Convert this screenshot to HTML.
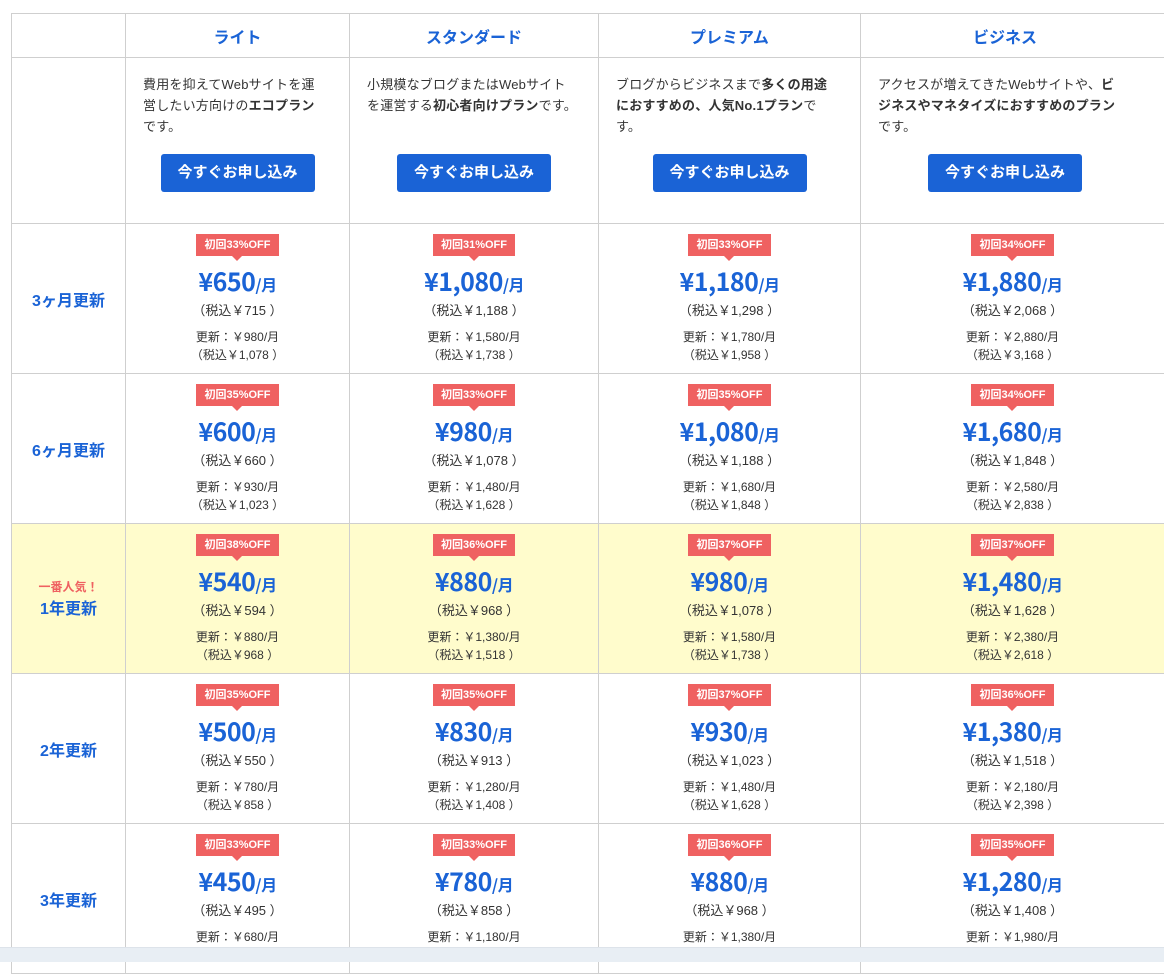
<!DOCTYPE html><html><head><meta charset="utf-8"><style>
body{margin:0;width:1164px;height:961px;overflow:hidden;background:#fff;font-family:"Liberation Sans","Noto Sans CJK JP",sans-serif;color:#333}
table{position:absolute;left:11px;top:13px;border-collapse:collapse;table-layout:fixed;width:1160px}
td{border:1px solid #cfcfcf;padding:0;vertical-align:top;text-align:center}
.h td{height:43px;vertical-align:middle;color:#1a63d6;font-weight:bold;font-size:16px}
.d td{height:165px;text-align:left}
.desc{font-size:13px;line-height:21px;padding:16px 20px 0 17px;height:80px;letter-spacing:0.2px}
.d td:nth-child(2) .desc{padding-right:28px}
.d td:last-child .desc{width:244px;padding-right:0}
.btn{display:block;margin:0 auto;width:154px;height:38px;line-height:38px;background:#1a63d6;color:#fff;border-radius:3px;font-weight:bold;font-size:15px;text-align:center}
.d td:last-child .btn{margin-left:67px}
.r td{height:149px}
.lab{vertical-align:middle!important;color:#1a63d6;font-weight:bold;font-size:16px}
.y td{background:#fffccc}
.badge{display:inline-block;position:relative;margin-top:10px;background:#ef6161;color:#fff;font-weight:bold;font-size:11px;height:22px;line-height:22px;padding:0 8px}
.badge:after{content:"";position:absolute;left:50%;margin-left:-5px;bottom:-5px;border:5px solid transparent;border-bottom:0;border-top-color:#ef6161}
.p{color:#1a63d6;font-weight:bold;font-size:25px;line-height:30px;height:30px;margin-top:10px;font-family:"Noto Sans CJK JP",sans-serif;letter-spacing:-0.5px}
.p small{font-size:16px;line-height:16px}
.t{font-size:13px;line-height:18px;margin-top:6px}
.u{font-size:12px;line-height:18px;margin-top:8px}
.pop{color:#ef6161;font-size:12px;display:block;line-height:16px}
.bar{position:absolute;left:0;top:947px;width:1164px;height:14px;background:#e8eef4;border-top:1px solid #dde3ea}
</style></head><body>
<table>
<colgroup><col style="width:114px"><col style="width:224px"><col style="width:249px"><col style="width:262px"><col style="width:311px"></colgroup>
<tr class="h"><td></td><td>ライト</td><td>スタンダード</td><td>プレミアム</td><td style="text-align:left;padding-left:112px">ビジネス</td></tr>
<tr class="d"><td></td>
<td><div class="desc">費用を抑えてWebサイトを運営したい方向けの<b>エコプラン</b>です。</div><span class="btn">今すぐお申し込み</span></td>
<td><div class="desc">小規模なブログまたはWebサイトを運営する<b>初心者向けプラン</b>です。</div><span class="btn">今すぐお申し込み</span></td>
<td><div class="desc">ブログからビジネスまで<b>多くの用途におすすめの、人気No.1プラン</b>です。</div><span class="btn">今すぐお申し込み</span></td>
<td><div class="desc">アクセスが増えてきたWebサイトや、<b>ビジネスやマネタイズにおすすめのプラン</b>です。</div><span class="btn">今すぐお申し込み</span></td></tr>

<tr class="r"><td class="lab">3ヶ月更新</td>
<td><span class="badge">初回33%OFF</span><div class="p">¥650<small>/月</small></div><div class="t">（税込￥715 ）</div><div class="u">更新：￥980/月<br>（税込￥1,078 ）</div></td>
<td><span class="badge">初回31%OFF</span><div class="p">¥1,080<small>/月</small></div><div class="t">（税込￥1,188 ）</div><div class="u">更新：￥1,580/月<br>（税込￥1,738 ）</div></td>
<td><span class="badge">初回33%OFF</span><div class="p">¥1,180<small>/月</small></div><div class="t">（税込￥1,298 ）</div><div class="u">更新：￥1,780/月<br>（税込￥1,958 ）</div></td>
<td style="padding-right:7px"><span class="badge">初回34%OFF</span><div class="p">¥1,880<small>/月</small></div><div class="t">（税込￥2,068 ）</div><div class="u">更新：￥2,880/月<br>（税込￥3,168 ）</div></td></tr>

<tr class="r"><td class="lab">6ヶ月更新</td>
<td><span class="badge">初回35%OFF</span><div class="p">¥600<small>/月</small></div><div class="t">（税込￥660 ）</div><div class="u">更新：￥930/月<br>（税込￥1,023 ）</div></td>
<td><span class="badge">初回33%OFF</span><div class="p">¥980<small>/月</small></div><div class="t">（税込￥1,078 ）</div><div class="u">更新：￥1,480/月<br>（税込￥1,628 ）</div></td>
<td><span class="badge">初回35%OFF</span><div class="p">¥1,080<small>/月</small></div><div class="t">（税込￥1,188 ）</div><div class="u">更新：￥1,680/月<br>（税込￥1,848 ）</div></td>
<td style="padding-right:7px"><span class="badge">初回34%OFF</span><div class="p">¥1,680<small>/月</small></div><div class="t">（税込￥1,848 ）</div><div class="u">更新：￥2,580/月<br>（税込￥2,838 ）</div></td></tr>

<tr class="r y"><td class="lab"><span class="pop">一番人気！</span>1年更新</td>
<td><span class="badge">初回38%OFF</span><div class="p">¥540<small>/月</small></div><div class="t">（税込￥594 ）</div><div class="u">更新：￥880/月<br>（税込￥968 ）</div></td>
<td><span class="badge">初回36%OFF</span><div class="p">¥880<small>/月</small></div><div class="t">（税込￥968 ）</div><div class="u">更新：￥1,380/月<br>（税込￥1,518 ）</div></td>
<td><span class="badge">初回37%OFF</span><div class="p">¥980<small>/月</small></div><div class="t">（税込￥1,078 ）</div><div class="u">更新：￥1,580/月<br>（税込￥1,738 ）</div></td>
<td style="padding-right:7px"><span class="badge">初回37%OFF</span><div class="p">¥1,480<small>/月</small></div><div class="t">（税込￥1,628 ）</div><div class="u">更新：￥2,380/月<br>（税込￥2,618 ）</div></td></tr>

<tr class="r"><td class="lab">2年更新</td>
<td><span class="badge">初回35%OFF</span><div class="p">¥500<small>/月</small></div><div class="t">（税込￥550 ）</div><div class="u">更新：￥780/月<br>（税込￥858 ）</div></td>
<td><span class="badge">初回35%OFF</span><div class="p">¥830<small>/月</small></div><div class="t">（税込￥913 ）</div><div class="u">更新：￥1,280/月<br>（税込￥1,408 ）</div></td>
<td><span class="badge">初回37%OFF</span><div class="p">¥930<small>/月</small></div><div class="t">（税込￥1,023 ）</div><div class="u">更新：￥1,480/月<br>（税込￥1,628 ）</div></td>
<td style="padding-right:7px"><span class="badge">初回36%OFF</span><div class="p">¥1,380<small>/月</small></div><div class="t">（税込￥1,518 ）</div><div class="u">更新：￥2,180/月<br>（税込￥2,398 ）</div></td></tr>

<tr class="r"><td class="lab">3年更新</td>
<td><span class="badge">初回33%OFF</span><div class="p">¥450<small>/月</small></div><div class="t">（税込￥495 ）</div><div class="u">更新：￥680/月<br>（税込￥748 ）</div></td>
<td><span class="badge">初回33%OFF</span><div class="p">¥780<small>/月</small></div><div class="t">（税込￥858 ）</div><div class="u">更新：￥1,180/月<br>（税込￥1,298 ）</div></td>
<td><span class="badge">初回36%OFF</span><div class="p">¥880<small>/月</small></div><div class="t">（税込￥968 ）</div><div class="u">更新：￥1,380/月<br>（税込￥1,518 ）</div></td>
<td style="padding-right:7px"><span class="badge">初回35%OFF</span><div class="p">¥1,280<small>/月</small></div><div class="t">（税込￥1,408 ）</div><div class="u">更新：￥1,980/月<br>（税込￥2,178 ）</div></td></tr>
</table>
<div class="bar"></div>
</body></html>
